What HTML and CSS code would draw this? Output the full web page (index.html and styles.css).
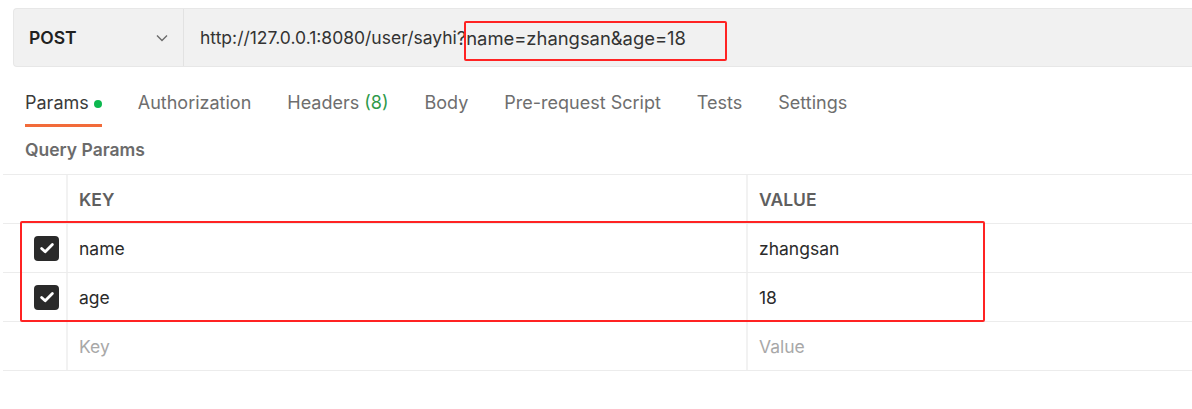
FILE: index.html
```html
<!DOCTYPE html>
<html>
<head>
<meta charset="utf-8">
<link rel="stylesheet" href="styles.css">
</head>
<body>
<div class="page">
  <div class="request-bar">
    <div class="method">
      <span class="method-name">POST</span>
      <svg class="chevron" width="12" height="8" viewBox="0 0 12 8"><path d="M1 1.5 L6 6.5 L11 1.5" fill="none" stroke="#6b6b6b" stroke-width="1.4"/></svg>
    </div>
    <div class="url">http://127.0.0.1:8080/user/sayhi<span class="query">?name=zhangsan&amp;age=18</span></div>
    <div class="mark mark-url"></div>
  </div>

  <div class="tabs">
    <div class="tab active">Params <span class="dot"></span></div>
    <div class="tab">Authorization</div>
    <div class="tab">Headers <span class="count">(8)</span></div>
    <div class="tab">Body</div>
    <div class="tab">Pre-request Script</div>
    <div class="tab">Tests</div>
    <div class="tab">Settings</div>
  </div>

  <div class="section-title">Query Params</div>

  <div class="table">
    <div class="row head">
      <div class="cell check"></div>
      <div class="cell key">KEY</div>
      <div class="cell value">VALUE</div>
    </div>
    <div class="row">
      <div class="cell check"><span class="box"><svg width="18" height="18" viewBox="0 0 18 18"><path d="M3.6 9.4 L7.2 12.8 L14.4 5.4" fill="none" stroke="#fff" stroke-width="2.8" stroke-linecap="round" stroke-linejoin="round"/></svg></span></div>
      <div class="cell key">name</div>
      <div class="cell value">zhangsan</div>
    </div>
    <div class="row">
      <div class="cell check"><span class="box"><svg width="18" height="18" viewBox="0 0 18 18"><path d="M3.6 9.4 L7.2 12.8 L14.4 5.4" fill="none" stroke="#fff" stroke-width="2.8" stroke-linecap="round" stroke-linejoin="round"/></svg></span></div>
      <div class="cell key">age</div>
      <div class="cell value">18</div>
    </div>
    <div class="row">
      <div class="cell check"></div>
      <div class="cell key placeholder">Key</div>
      <div class="cell value placeholder">Value</div>
    </div>
    <div class="mark mark-rows"></div>
  </div>
</div>
</body>
</html>
```

FILE: styles.css
```css
* { box-sizing: border-box; }
html, body { margin: 0; padding: 0; background: #fff; }
body {
  font-family: Inter, "Noto Sans", "Liberation Sans", sans-serif;
  color: #2b2b2b;
  width: 1192px;
  height: 409px;
  overflow: hidden;
}
.page { padding-top: 8px; }

.request-bar {
  position: relative;
  margin-left: 13px;
  height: 59px;
  display: flex;
  align-items: stretch;
  background: #f1f1f1;
  border: 1px solid #e7e7e7;
  border-right: none;
  border-radius: 4px 0 0 4px;
}
.method {
  width: 170px;
  display: flex;
  align-items: center;
  justify-content: space-between;
  padding: 0 15px 0 15px;
  border-right: 1px solid #e2e2e2;
}
.method-name { font-size: 17.5px; font-weight: 600; color: #212121; }
.chevron { margin-top: 1px; }
.url {
  display: flex;
  align-items: center;
  padding-left: 16px;
  font-size: 17.5px;
  color: #333;
  white-space: pre;
}
.query { font-size: 18.4px; }
.mark {
  position: absolute;
  border: 2px solid #ff2323;
  border-radius: 2px;
  pointer-events: none;
}
.mark-url { left: 450px; top: 12px; width: 263px; height: 40px; }

.tabs {
  display: flex;
  gap: 36px;
  padding-left: 25px;
  margin-top: 22px;
  height: 38px;
}
.tab {
  font-size: 18px;
  color: #6e6e6e;
  height: 38px;
  line-height: 28px;
  display: flex;
  align-items: flex-start;
}
.tab.active {
  color: #3a3a3a;
  border-bottom: 3px solid #f26b3a;
}
.dot {
  display: inline-block;
  width: 8px;
  height: 8px;
  border-radius: 50%;
  background: #0cb84f;
  margin: 11px 0 0 5px;
}
.count { color: #2f9a4b; margin-left: 5px; }

.section-title {
  padding-left: 25px;
  margin-top: 11px;
  font-size: 17.5px;
  font-weight: 600;
  color: #6b6b6b;
  height: 36px;
  line-height: 24px;
}

.table {
  position: relative;
  margin-left: 3px;
  border-top: 1px solid #ececec;
}
.row {
  display: grid;
  grid-template-columns: 63px 680px 1fr;
  height: 49px;
  border-bottom: 1px solid #ececec;
}
.cell {
  display: flex;
  align-items: center;
  font-size: 17.5px;
  color: #2b2b2b;
}
.cell.key { padding-left: 11px; border-left: 2px solid #f2f2f2; }
.cell.value { padding-left: 11px; border-left: 2px solid #f2f2f2; }
.head .cell { font-size: 17.5px; font-weight: 600; color: #5f5f5f; }
.cell.placeholder { color: #a8a8a8; }
.cell.check { padding-left: 31px; }
.box {
  width: 25px;
  height: 25px;
  border-radius: 4px;
  background: #2a2a2a;
  display: flex;
  align-items: center;
  justify-content: center;
}
.mark-rows { left: 17px; top: 46px; width: 965px; height: 101px; }
```
